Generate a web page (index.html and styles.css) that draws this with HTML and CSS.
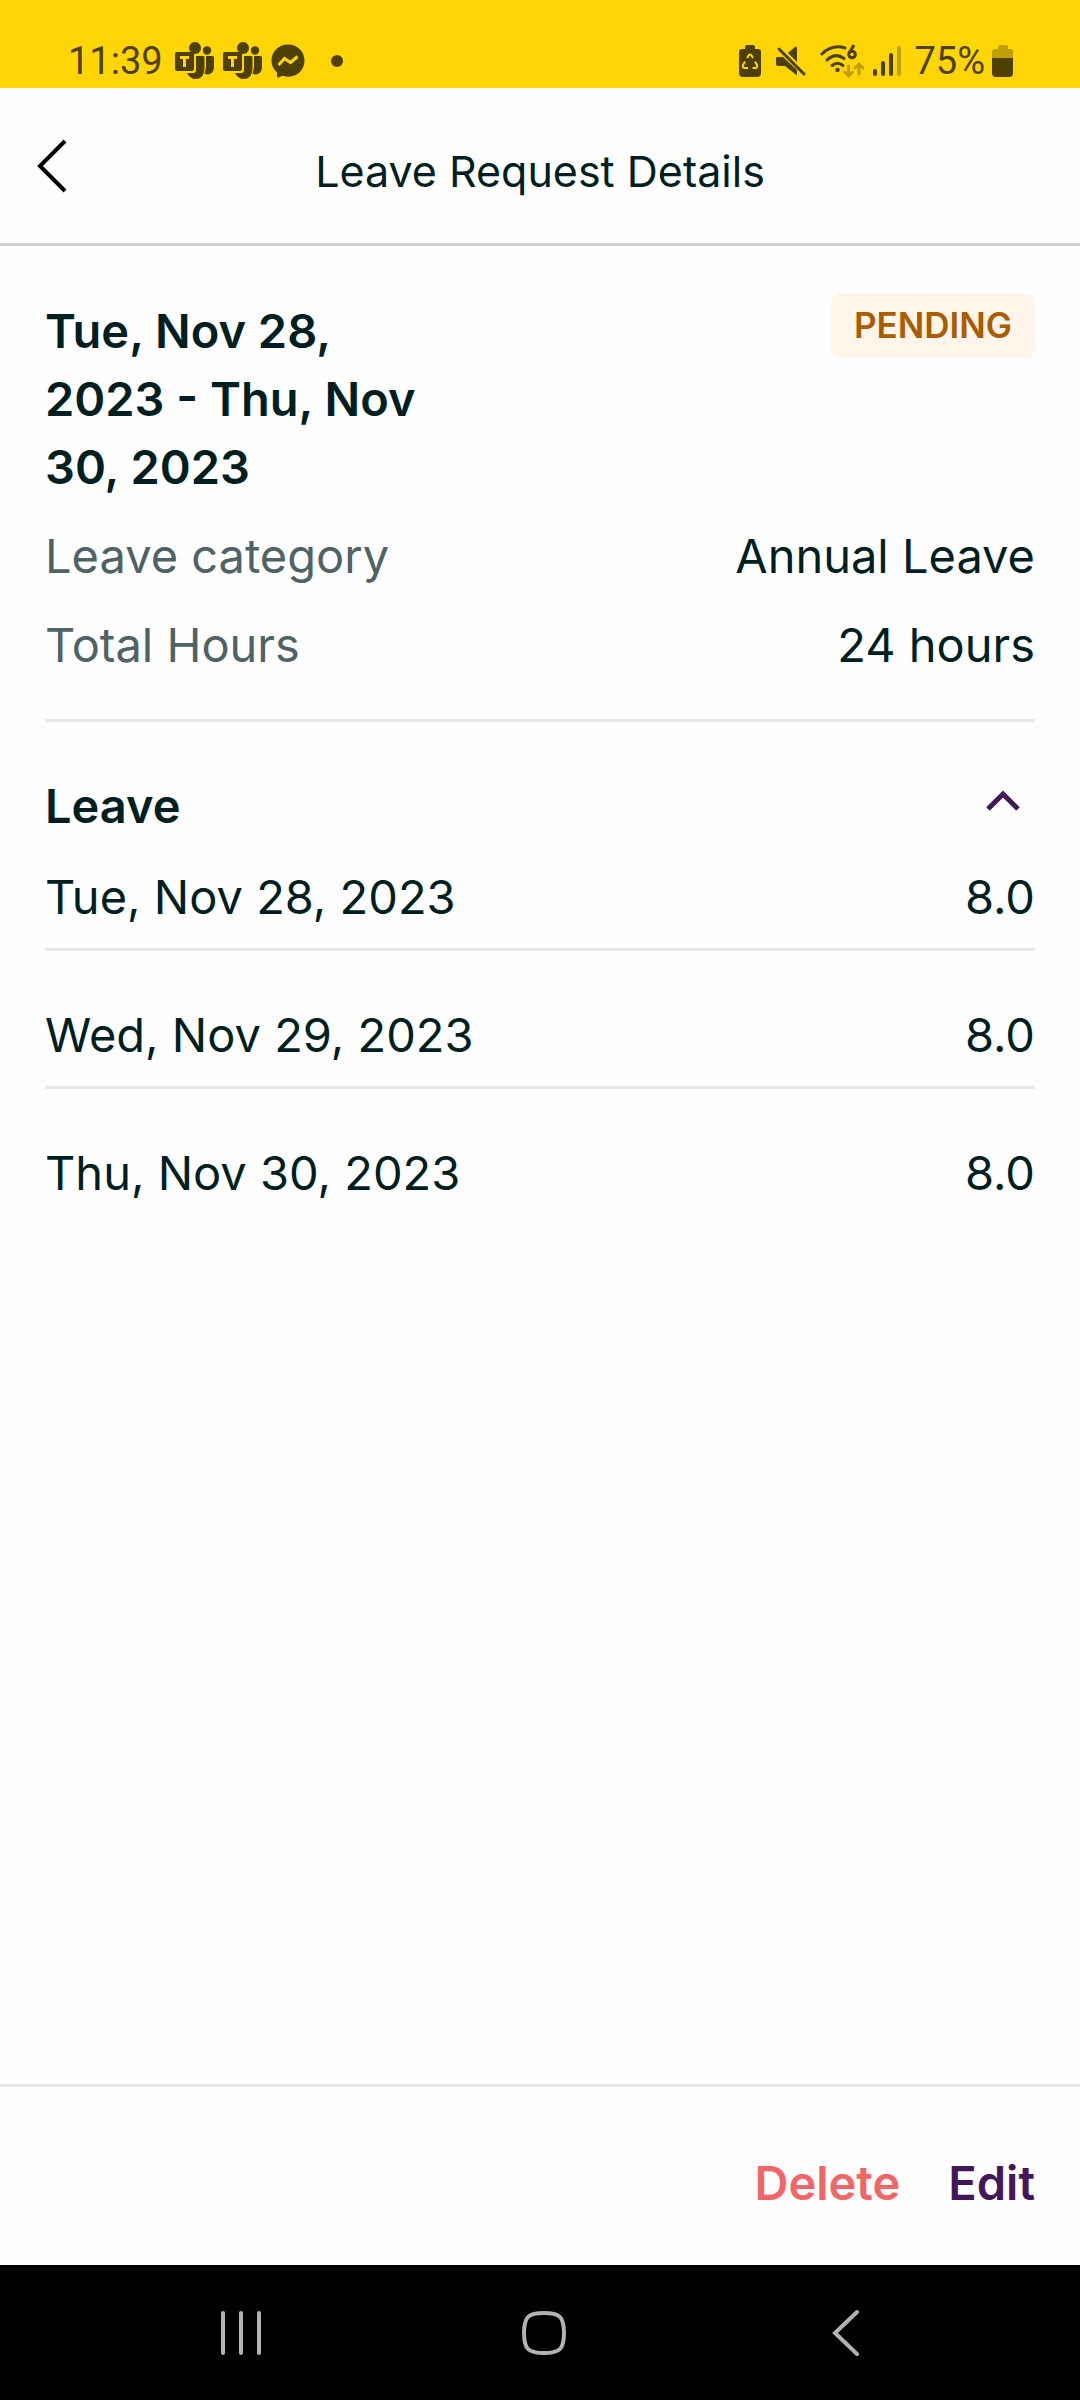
FILE: index.html
```html
<!DOCTYPE html>
<html lang="en">
<head>
<meta charset="utf-8">
<meta name="viewport" content="width=device-width, initial-scale=1">
<title>Leave Request Details</title>
<link rel="stylesheet" href="styles.css">
</head>
<body>
<div class="screen">
  <div class="status-bar">
    <div class="status-group">
      <span class="status-text">11:39</span>
      <svg class="teams" width="40" height="38" viewBox="0 0 40 38" aria-label="Teams">
        <circle cx="20" cy="6" r="6"/><circle cx="32" cy="8.500" r="4.200"/>
        <path d="M31 14H37.500Q39 14 39 15.500V25C39 31 34 34 29.500 31.500Q31 28 31 24Z"/>
        <path d="M21 14H28.500Q29.500 14 29.500 15.500V26C29.500 33 26 37 21 37C17 37 14 35 12 31H18Q21 31 21 28Z"/>
        <rect x="0" y="10" width="19" height="19" rx="2"/>
        <path class="cutout" d="M5 15.500H14M9.500 15.500V25"/>
      </svg>
      <svg class="teams" width="40" height="38" viewBox="0 0 40 38" aria-label="Teams">
        <circle cx="20" cy="6" r="6"/><circle cx="32" cy="8.500" r="4.200"/>
        <path d="M31 14H37.500Q39 14 39 15.500V25C39 31 34 34 29.500 31.500Q31 28 31 24Z"/>
        <path d="M21 14H28.500Q29.500 14 29.500 15.500V26C29.500 33 26 37 21 37C17 37 14 35 12 31H18Q21 31 21 28Z"/>
        <rect x="0" y="10" width="19" height="19" rx="2"/>
        <path class="cutout" d="M5 15.500H14M9.500 15.500V25"/>
      </svg>
      <svg class="messenger" width="34" height="34" viewBox="0 0 34 34" aria-label="Messenger">
        <path d="M17 0.500C7.500 0.500 0.500 7.500 0.500 16.500C0.500 21.500 2.500 25.500 6 28.500V32.500Q6 34 7.500 33.400L11.500 31.800C25 35.500 33.500 26.500 33.500 16.500C33.500 7.500 26.500 0.500 17 0.500Z"/>
        <path class="cutout" d="M7.500 21L13.500 14.500L19.500 18.500L26.500 12.500"/>
      </svg>
      <svg class="more-dot" width="12" height="12" viewBox="0 0 12 12" aria-hidden="true"><circle cx="6" cy="6" r="6"/></svg>
    </div>
    <div class="status-group status-right">
      <svg width="24" height="34" viewBox="0 0 24 34" aria-label="Battery protection">
        <path d="M7 5V3Q7 1 9 1H15Q17 1 17 3V5H20Q23 5 23 8V29Q23 33 19 33H5Q1 33 1 29V8Q1 5 4 5Z"/>
        <g class="recycle"><path d="M9 14L10.500 11.500Q12 9.500 13.500 11.500L15 14"/><path d="M17 17.500L19 21Q20 24 17 24H14.500"/><path d="M10 24H7Q4 24 5 21L7 17.500"/></g>
      </svg>
      <svg width="32" height="32" viewBox="0 0 32 32" aria-label="Muted">
        <path d="M2 12H8L22 25V30Q21 30 20 29L10 21H3Q1 21 1 19V13Q1 12 2 12ZM13 8L20 2Q22 0.500 22 3V17Z"/>
        <path class="slash" d="M4 4L29 29"/>
      </svg>
      <svg class="wifi" width="46" height="34" viewBox="0 0 46 34" aria-label="Wi-Fi 6">
        <g class="wave"><path d="M2 10Q12 0 25 4"/><path d="M7 16Q15.500 8 24 14.500"/><path d="M12 21.500Q17.500 17 23 21.500"/></g>
        <circle cx="17.500" cy="26" r="2.200"/>
        <path class="six" d="M34 1L29.500 8.500"/><circle class="six" cx="32" cy="10.500" r="3.300"/>
        <g class="faded-line"><path d="M28.500 22V32M24.500 28L28.500 32L32.500 28"/><path d="M39 30V20M35 24L39 20L43 24"/></g>
      </svg>
      <svg width="28" height="32" viewBox="0 0 28 32" aria-label="Signal">
        <rect x="0" y="24" width="4" height="7" rx="2"/><rect x="8" y="16" width="4" height="15" rx="2"/><rect x="16" y="8" width="4" height="23" rx="2"/><rect class="faded" x="24" y="1" width="4" height="30" rx="2"/>
      </svg>
      <span class="status-text percent">75%</span>
      <svg width="22" height="34" viewBox="0 0 22 34" aria-label="Battery">
        <path class="faded" d="M6 5V3Q6 1 8 1H14Q16 1 16 3V5H19Q21 5 21 8V14H0V8Q0 5 3 5Z"/>
        <path d="M0 14H21V29Q21 33 17 33H4Q0 33 0 29Z"/>
      </svg>
    </div>
  </div>

  <header class="app-bar">
    <button class="icon-button" type="button" aria-label="Back">
      <svg width="32" height="56" viewBox="0 0 32 56"><path class="back-line" d="M29 3L4 28L29 53"/></svg>
    </button>
    <h1 class="title">Leave Request Details</h1>
  </header>

  <main class="content">
    <section class="summary">
      <div class="summary-head">
        <h2 class="heading range">Tue, Nov 28, 2023 - Thu, Nov 30, 2023</h2>
        <span class="badge">PENDING</span>
      </div>
      <dl class="facts">
        <div class="fact"><dt>Leave category</dt><dd>Annual Leave</dd></div>
        <div class="fact"><dt>Total Hours</dt><dd>24 hours</dd></div>
      </dl>
    </section>
    <section class="leave">
      <div class="leave-head">
        <h2 class="heading">Leave</h2>
        <button class="icon-button toggle" type="button" aria-label="Collapse leave" aria-expanded="true">
          <svg width="34" height="22" viewBox="0 0 34 22"><path class="toggle-line" d="M2 19L17 4L32 19"/></svg>
        </button>
      </div>
      <table class="days">
        <tbody>
          <tr><td>Tue, Nov 28, 2023</td><td class="hours">8.0</td></tr>
          <tr><td>Wed, Nov 29, 2023</td><td class="hours">8.0</td></tr>
          <tr><td>Thu, Nov 30, 2023</td><td class="hours">8.0</td></tr>
        </tbody>
      </table>
    </section>
  </main>

  <footer class="actions">
    <button class="action delete" type="button">Delete</button>
    <button class="action edit" type="button">Edit</button>
  </footer>

  <nav class="system-nav" aria-label="System">
    <button class="icon-button" type="button" aria-label="Recents">
      <svg width="46" height="48" viewBox="0 0 46 48"><path class="nav-line" d="M5 4V44M23 4V44M41 4V44"/></svg>
    </button>
    <button class="icon-button" type="button" aria-label="Home">
      <svg width="46" height="48" viewBox="0 0 46 48"><path class="nav-line" d="M23 4C38 4 43 7 43 24C43 41 38 44 23 44C8 44 3 41 3 24C3 7 8 4 23 4Z"/></svg>
    </button>
    <button class="icon-button" type="button" aria-label="Back">
      <svg width="46" height="48" viewBox="0 0 46 48"><path class="nav-line" d="M34 3L12 24L34 45"/></svg>
    </button>
  </nav>
</div>
</body>
</html>
```
FILE: styles.css
```css
* { box-sizing: border-box; }

body {
  margin: 0;
  background: #fefefe;
  color: #001f22;
  font-family: Inter, "Open Sans", sans-serif;
  font-size: 47px;
  line-height: 68px;
}

h1, h2, dl, dd { margin: 0; }

button {
  border: 0;
  padding: 0;
  background: none;
  font: inherit;
  cursor: pointer;
}

svg { display: block; flex: none; }

.screen {
  display: flex;
  flex-direction: column;
  min-height: 100vh;
}

.status-bar {
  display: flex;
  justify-content: space-between;
  padding: 34px 66px 0 68px;
  height: 88px;
  background: #ffd505;
  color: #4d4000;
}

.status-bar svg { fill: #4d4000; }
.status-group { display: flex; align-items: center; gap: 8px; height: 54px; }
.status-right { gap: 13px; }
.status-text {
  font-family: Roboto, sans-serif;
  font-size: 38px;
  line-height: 54px;
}
.teams:first-of-type { margin-left: 4px; }
.more-dot { margin-left: 18px; }
.wifi { margin-right: -6px; }
.percent { margin-right: -6px; }

.cutout { fill: none; stroke: #ffd505; stroke-width: 3; }
.recycle path { fill: none; stroke: #ffd505; stroke-width: 2; }
.slash { stroke: #4d4000; stroke-width: 3; stroke-linecap: round; }
.wave path { fill: none; stroke: #4d4000; stroke-width: 3; stroke-linecap: round; }
.six { fill: none; stroke: #4d4000; stroke-width: 3; }
.faded-line path { fill: none; stroke: #bfa004; stroke-width: 3; stroke-linecap: round; }
.status-bar .faded { fill: #bfa004; }

.app-bar {
  display: grid;
  grid-template-columns: 32px 1fr 32px;
  align-items: center;
  height: 158px;
  padding: 0 36px;
  border-bottom: 3px solid #d0d0d4;
}
.title {
  padding-top: 10px;
  font-size: 43px;
  font-weight: 400;
  text-align: center;
}
.back-line { fill: none; stroke: #000; stroke-width: 4; }

.content { flex: 1; padding: 47px 45px 0; }

.summary { padding-bottom: 40px; border-bottom: 3px solid #e8e8e8; }
.summary-head {
  display: flex;
  align-items: flex-start;
  justify-content: space-between;
}
.heading { font-size: 47px; font-weight: 600; }
.range { max-width: 39%; padding-top: 4px; }
.badge {
  padding: 0 23px;
  border-radius: 10px;
  background: #fff5ea;
  color: #a95c00;
  font-size: 35px;
  font-weight: 600;
  line-height: 65px;
}
.fact { display: flex; justify-content: space-between; padding-top: 21px; }
.fact dt { color: #4f6265; }

.leave { padding-top: 50px; }
.leave-head { display: flex; justify-content: space-between; align-items: center; }
.toggle { padding: 0 15px 10px; }
.toggle-line { fill: none; stroke: #41195b; stroke-width: 5; }

.days { width: 100%; border-spacing: 0; }
.days td { padding: 50px 0 17px; border-bottom: 3px solid #e8e8e8; }
.days tr:first-child td { padding-top: 23px; }
.days tr:last-child td { border-bottom: 0; }
.days .hours { text-align: right; }

.actions {
  display: flex;
  justify-content: flex-end;
  gap: 48px;
  padding: 62px 45px 48px;
  border-top: 3px solid #e8e8e8;
}
.action { font-weight: 600; }
.delete { color: #f16667; }
.edit { color: #41195b; }

.system-nav {
  display: flex;
  justify-content: space-between;
  align-items: center;
  height: 135px;
  padding: 0 211px 0 218px;
  background: #000;
}
.nav-line { fill: none; stroke: #b2b2b2; stroke-width: 4; stroke-linecap: round; }
```
